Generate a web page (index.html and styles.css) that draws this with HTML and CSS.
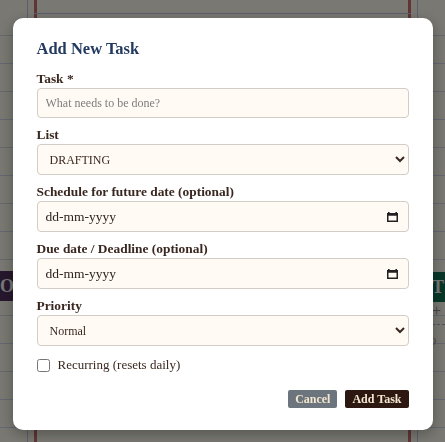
FILE: index.html
```html
<!DOCTYPE html>
<html lang="en">
<head>
    <meta charset="UTF-8">
    <meta name="viewport" content="width=device-width, initial-scale=1.0">
    <title>Add New Task</title>
    <link rel="stylesheet" href="styles.css">
</head>
<body>
    <div class="board">
        <div class="lane lane-left">
            <div class="lane-head purple">O x</div>
        </div>
        <div class="lane lane-main">
            <div class="main-top"></div>
        </div>
        <div class="lane lane-right">
            <div class="lane-head green">ST</div>
            <div class="lane-add">+</div>
            <div class="lane-empty">No</div>
        </div>
    </div>

    <div class="backdrop">
        <div class="modal">
            <h3 class="modal-title">Add New Task</h3>
            <form class="task-form">
                <div class="field">
                    <label for="task">Task *</label>
                    <input type="text" id="task" class="control control-text" placeholder="What needs to be done?">
                </div>
                <div class="field">
                    <label for="list">List</label>
                    <select id="list" class="control control-small">
                        <option>DRAFTING</option>
                        <option>REVIEW</option>
                        <option>DONE</option>
                    </select>
                </div>
                <div class="field">
                    <label for="sched">Schedule for future date (optional)</label>
                    <div class="date-wrap">
                        <input type="text" id="sched" class="control control-date" placeholder="dd-mm-yyyy">
                        <svg class="cal-icon" width="11" height="11" viewBox="0 0 11 11">
                            <rect x="1" y="1" width="1.6" height="2" fill="#222"/>
                            <rect x="8.4" y="1" width="1.6" height="2" fill="#222"/>
                            <rect x="0.75" y="2.75" width="9.5" height="7.5" fill="none" stroke="#222" stroke-width="1.5"/>
                            <rect x="0.75" y="2.75" width="9.5" height="2" fill="#222"/>
                        </svg>
                    </div>
                </div>
                <div class="field">
                    <label for="due">Due date / Deadline (optional)</label>
                    <div class="date-wrap">
                        <input type="text" id="due" class="control control-date" placeholder="dd-mm-yyyy">
                        <svg class="cal-icon" width="11" height="11" viewBox="0 0 11 11">
                            <rect x="1" y="1" width="1.6" height="2" fill="#222"/>
                            <rect x="8.4" y="1" width="1.6" height="2" fill="#222"/>
                            <rect x="0.75" y="2.75" width="9.5" height="7.5" fill="none" stroke="#222" stroke-width="1.5"/>
                            <rect x="0.75" y="2.75" width="9.5" height="2" fill="#222"/>
                        </svg>
                    </div>
                </div>
                <div class="field">
                    <label for="prio">Priority</label>
                    <select id="prio" class="control control-small">
                        <option>Normal</option>
                        <option>High</option>
                        <option>Low</option>
                    </select>
                </div>
                <div class="check-row">
                    <input type="checkbox" id="recur">
                    <label for="recur">Recurring (resets daily)</label>
                </div>
                <div class="actions">
                    <button type="button" class="btn btn-cancel">Cancel</button>
                    <button type="submit" class="btn btn-add">Add Task</button>
                </div>
            </form>
        </div>
    </div>
</body>
</html>
```

FILE: styles.css
```css
html, body {
    margin: 0;
    height: 100%;
}

body {
    background: #f2f1e4;
    font-family: "Liberation Serif", "DejaVu Serif", serif;
    overflow: hidden;
}

.board {
    display: flex;
    height: 442px;
}

.lane {
    background-image: repeating-linear-gradient(to bottom, transparent 0, transparent 27px, #c9cde2 27px, #c9cde2 28px);
    background-position: 0 8px;
}

.lane-left {
    width: 28px;
    border-right: 1px solid #b8bdd8;
    padding-top: 271px;
    box-sizing: border-box;
}

.lane-main {
    flex: 1;
    background-image: none;
    border-left: 6px solid #f2f1e4;
    border-right: 6px solid #f2f1e4;
    box-shadow: inset 3px 0 0 #c46a6a, inset -3px 0 0 #c46a6a;
}

.main-top {
    height: 13px;
    border-bottom: 1px solid #b8bdd8;
}

.lane-right {
    width: 28px;
    border-left: 1px solid #b8bdd8;
    padding-top: 272px;
    box-sizing: border-box;
}

.lane-head {
    height: 30px;
    line-height: 30px;
    font-weight: bold;
    font-size: 18px;
    color: #f0f0f0;
    overflow: hidden;
    white-space: nowrap;
}

.purple {
    background: #4e2f5a;
    text-align: right;
}

.green {
    background: #0f6e50;
    padding-left: 4px;
}

.lane-add {
    color: #888;
    font-size: 16px;
    padding: 0 0 4px 14px;
    border-bottom: 1px dashed #a0a4c0;
}

.lane-empty {
    font-style: italic;
    color: #999;
    font-size: 14px;
    padding: 8px 0 0 2px;
}

.backdrop {
    position: fixed;
    inset: 0;
    background: rgba(0, 0, 0, 0.5);
    display: flex;
    justify-content: center;
    align-items: flex-start;
    padding-top: 18px;
}

.modal {
    width: 420px;
    height: 412px;
    box-sizing: border-box;
    background: #fff;
    border-radius: 10px;
    padding: 21px 24px 0 24px;
    box-shadow: 0 4px 14px rgba(0, 0, 0, 0.3);
}

.modal-title {
    margin: 0 0 13px 0;
    font-size: 16.5px;
    line-height: 19px;
    color: #233a60;
    font-weight: bold;
}

.field {
    margin-bottom: 9px;
}

.field label {
    display: block;
    font-weight: bold;
    font-size: 13.4px;
    line-height: 16px;
    margin-bottom: 1px;
    color: #3a2820;
}

.control {
    display: block;
    width: 100%;
    height: 31px;
    box-sizing: border-box;
    border: 1px solid #d2cdc6;
    border-radius: 4px;
    background: #fffaf4;
    font-family: "Liberation Serif", serif;
    font-size: 13px;
    color: #3a2820;
    padding: 0 8px;
}

.control-text {
    height: 30px;
    font-size: 12px;
}

.control-text::placeholder {
    color: #7d7d7d;
}

.control-small {
    font-size: 12px;
}

.date-wrap {
    position: relative;
}

.control-date {
    font-size: 13.5px;
}

.control-date::placeholder {
    color: #2e241e;
}

.cal-icon {
    position: absolute;
    right: 11px;
    top: 10px;
    pointer-events: none;
}

.check-row {
    display: flex;
    align-items: center;
    margin-top: 11px;
    font-size: 13px;
    color: #3a2820;
}

.check-row input {
    width: 13px;
    height: 13px;
    margin: 0 8px 0 0;
}

.actions {
    display: flex;
    justify-content: flex-end;
    gap: 8px;
    margin-top: 17px;
}

.btn {
    height: 18px;
    border: none;
    border-radius: 2px;
    padding: 0 7px;
    font-family: "Liberation Serif", serif;
    font-weight: bold;
    font-size: 12px;
    color: #f4e6cf;
    cursor: pointer;
}

.btn-cancel {
    background: #6c757d;
}

.btn-add {
    background: #2c1810;
}
```
